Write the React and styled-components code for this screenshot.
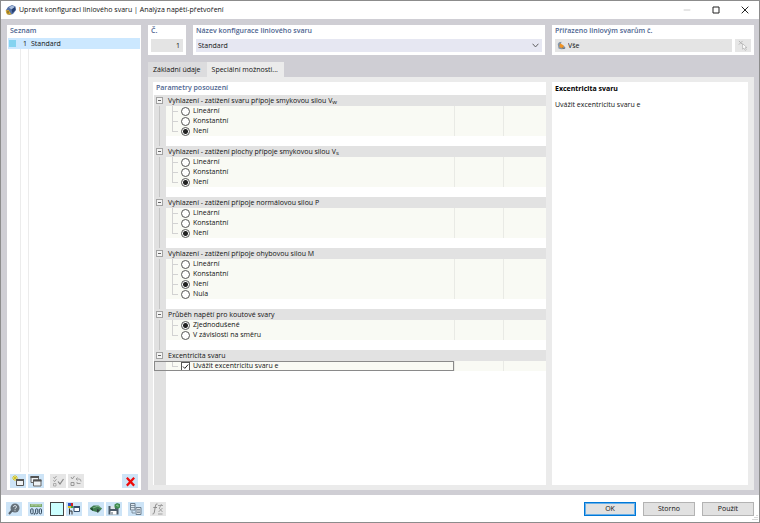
import React, { useState } from 'react';
import styled, { createGlobalStyle, ThemeProvider } from 'styled-components';

const theme = {
  frame: '#cfced4',
  body: '#ebebeb',
  field: '#e4e4e4',
  lavender: '#e6e7f2',
  select: '#cce8ff',
  tool: '#cde4f7',
  heading: '#4d648f',
  text: '#111',
};

const Style = createGlobalStyle`
  * {
    box-sizing: border-box;
  }
  body {
    margin: 0;
  }
  body, button, input, select {
    font-family: 'Open Sans', 'Noto Sans', sans-serif;
    font-size: 7px;
    font-weight: 500;
    line-height: 10px;
    color: ${theme.text};
  }
  svg {
    display: block;
  }
`;

const Window = styled.div`
  position: relative;
  display: flex;
  flex-direction: column;
  min-height: 100vh;
  background: white;
  border: 1px solid #8c8c8c;
`;

const TitleBar = styled.header`
  display: flex;
  align-items: center;
  height: 18px;
  padding-left: 4px;
`;

const Title = styled.h1`
  flex: 1;
  margin: 0 0 0 2px;
  font-size: 7px;
  font-weight: 500;
`;

const WindowButton = styled.button`
  display: flex;
  align-items: center;
  justify-content: center;
  width: 29px;
  height: 18px;
  padding: 0;
  border: 0;
  background: none;
`;

const Content = styled.div`
  flex: 1;
  display: flex;
  gap: 7px;
  padding: 6px 5px 5px 6px;
  background: ${(p) => p.theme.frame};
`;

const Panel = styled.section`
  display: flex;
  flex-direction: column;
  background: white;
`;

const ListPanel = styled(Panel)`
  width: 134px;
`;

const Heading = styled.h2`
  margin: 0;
  padding: 0 3px;
  font-size: 7px;
  line-height: 12px;
  font-weight: 600;
  color: ${(p) => p.theme.heading};
`;

const List = styled.div`
  flex: 1;
  margin: 1px 1px 0;
  background: linear-gradient(#ececec, #ececec) 12px 0 / 1px 100% no-repeat,
    linear-gradient(#ececec, #ececec) 20px 0 / 1px 100% no-repeat;
`;

const ListItem = styled.button`
  display: grid;
  grid-template-columns: 12px 8px 1fr;
  align-items: center;
  width: 100%;
  height: 11px;
  padding: 0;
  border: 0;
  text-align: left;
  background: ${(p) => p.theme.select};
`;

const Swatch = styled.span`
  width: 7px;
  height: 7px;
  margin-left: 1px;
  background: #84d3f0;
`;

const ListNumber = styled.span`
  text-align: right;
  padding-right: 1px;
`;

const ListName = styled.span`
  padding-left: 3px;
`;

const ListTools = styled.div`
  display: flex;
  gap: 2px;
  padding: 2px 3px;
`;

const ToolButton = styled.button`
  display: flex;
  align-items: center;
  justify-content: center;
  width: 16px;
  height: 14px;
  padding: 0;
  border: 0;
  margin-left: ${(p) => (p.$push ? 'auto' : p.$gap ? '4px' : 0)};
  background: ${(p) => (p.disabled ? '#e6e6e6' : p.theme.tool)};
`;

const Main = styled.main`
  flex: 1;
  min-width: 0;
  display: flex;
  flex-direction: column;
`;

const Fields = styled.div`
  display: grid;
  grid-template-columns: 38px 1fr 202px;
  gap: 7px;
  margin-bottom: 7px;
`;

const FieldCard = styled.div`
  display: flex;
  flex-direction: column;
  gap: 3px;
  height: 30px;
  padding: 1px 3px 3px;
  background: white;
`;

const Label = styled.label`
  line-height: 10px;
  font-weight: 600;
  color: ${(p) => p.theme.heading};
`;

const Control = styled.div`
  display: flex;
  align-items: center;
  flex: 1;
  gap: 2px;
  padding: 0 3px 0 2px;
  background: ${(p) => (p.$light ? p.theme.lavender : p.theme.field)};
`;

const Input = styled.input`
  flex: 1;
  min-width: 0;
  width: 100%;
  height: 13px;
  padding: 0;
  border: 0;
  outline: 0;
  background: none;
  text-align: ${(p) => (p.$right ? 'right' : 'left')};
`;

const Select = styled.select`
  flex: 1;
  height: 13px;
  padding: 0;
  border: 0;
  outline: 0;
  appearance: none;
  background: none;
`;

const ControlRow = styled.div`
  display: flex;
  flex: 1;
  gap: 3px;
`;

const PickButton = styled(ToolButton)`
  height: 13px;
`;

const Tabs = styled.div`
  display: flex;
`;

const Tab = styled.button`
  height: 15px;
  padding: 1px 6px 0 5px;
  border: 0;
  background: ${(p) => (p.$active ? p.theme.body : '#dcdcde')};
`;

const TabBody = styled.div`
  flex: 1;
  display: grid;
  grid-template-columns: 1fr 196px;
  gap: 6px;
  padding: 5px 6px 5px 5px;
  background: ${(p) => p.theme.body};
`;

const Tree = styled.div`
  flex: 1;
  display: flex;
  flex-direction: column;
  padding: 1px 0 0 1px;
`;

const Gutter = styled.div`
  width: 12px;
  background: ${(p) =>
      p.$line
        ? 'linear-gradient(#c6c6c6, #c6c6c6) 5px 0 / 1px 100% no-repeat, '
        : ''}
    #e1e1e1;
`;

const GroupHead = styled.div`
  display: flex;
  align-items: center;
  height: 11px;
  padding-left: 2px;
  background: #e2e2e2;
`;

const Toggle = styled.button`
  display: flex;
  align-items: center;
  justify-content: center;
  width: 7px;
  height: 7px;
  padding: 0;
  border: 1px solid #a2a2a2;
  background: #f4f4f4;
  line-height: 4px;

  &::after {
    content: '';
    width: 3px;
    height: 1px;
    background: #666;
  }
`;

const GroupTitle = styled.h3`
  margin: 0 0 0 5px;
  font-size: 7px;
  line-height: 10px;
  font-weight: 500;

  sub {
    font-size: 6px;
    line-height: 0;
    vertical-align: -1px;
  }
`;

const Row = styled.div`
  display: grid;
  grid-template-columns: 12px 1fr 49px 43px;
  height: 10px;
`;

const Option = styled.label`
  display: flex;
  align-items: center;
  gap: 3px;
  padding-left: 6px;
  background: #f9faf4;
`;

const Focus = styled.div`
  grid-column: 1 / 3;
  display: grid;
  grid-template-columns: 12px 1fr;
  outline: 1px solid #8a8a8a;
  outline-offset: -1px;
`;

const Cell = styled.div`
  background: #f9faf4;
  border-left: 1px solid #e9eae5;
`;

const Branch = styled.span`
  align-self: stretch;
  width: 6px;
  background: linear-gradient(#d2d2d2, #d2d2d2) 0 0 / 1px
      ${(p) => (p.$last ? '5px' : '100%')} no-repeat,
    linear-gradient(#d2d2d2, #d2d2d2) 0 5px / 100% 1px no-repeat;
`;

const Radio = styled.input`
  appearance: none;
  width: 9px;
  height: 9px;
  margin: 0;
  border: 1px solid #555;
  border-radius: 50%;
  background: white;

  &:checked {
    background: radial-gradient(circle, #222 0 2px, white 3px);
  }
`;

const Check = styled.input`
  appearance: none;
  width: 9px;
  height: 9px;
  margin: 0;
  border: 1px solid #555;
  background: white;

  &:checked {
    background: white
      url("data:image/svg+xml,%3Csvg xmlns='http://www.w3.org/2000/svg' viewBox='0 0 7 7'%3E%3Cpath d='M1 3.5L2.8 5.4L6.2 1.5' fill='none' stroke='%23222'/%3E%3C/svg%3E");
  }
`;

const Spacer = styled.div`
  display: flex;
  height: 10px;
`;

const Rest = styled.div`
  flex: 1;
  display: flex;
`;

const Info = styled(Panel)`
  padding: 2px 3px;
`;

const InfoTitle = styled.h2`
  margin: 0 0 6px;
  font-size: 7px;
  line-height: 10px;
  font-weight: 700;
  color: black;
`;

const InfoText = styled.p`
  margin: 0;
`;

const Footer = styled.footer`
  display: flex;
  align-items: center;
  justify-content: space-between;
  height: 27px;
  padding: 0 5px;
`;

const Group = styled.div`
  display: flex;
  gap: ${(p) => (p.$wide ? '7px' : '2px')};
`;

const DialogButton = styled.button`
  width: 52px;
  height: 14px;
  padding: 0;
  border: 1px solid ${(p) => (p.$primary ? '#0078d7' : '#b3b3b3')};
  box-shadow: ${(p) => (p.$primary ? 'inset 0 0 0 1px #6ab0e8' : 'none')};
  background: #e1e1e1;
`;

const ColorButton = styled(ToolButton)`
  width: 14px;
  border: 1px solid #444;
  background: #ccffff;
`;

const Grip = styled.span`
  position: absolute;
  right: 1px;
  bottom: 1px;
`;

const Icon = ({ size = 12, children }) => (
  <svg width={size} height={size} viewBox="0 0 12 12" fill="none" aria-hidden="true">
    {children}
  </svg>
);

const AppIcon = () => (
  <Icon>
    <path d="M1 6L3 3L7 1L10.5 2.5L11 6L8 10L4 11L1.5 9Z" fill="#5572a6" />
    <path d="M4 3.5L7 1.5L10 3L6.5 5.5Z" fill="#a9bddd" />
    <path d="M6.5 5.5L10 3L10.5 6L7.5 9Z" fill="#263f70" />
    <path d="M0.5 6.5L3.5 6L6.5 10.5L2 10.5Z" fill="#d9aa2d" />
    <path d="M3 7V9M3 9.5V10" stroke="#493b18" strokeWidth="0.8" />
  </Icon>
);

const WeldIcon = () => (
  <Icon size={9}>
    <path d="M1 4Q2 1 6 1L5 5L10 7L11 10Q6 12 2 10Z" fill="#8195aa" />
    <path d="M4 3L9 6L8 10L3 8Z" fill="#f29422" />
    <path d="M7 9Q9 11 11 9" stroke="#4b5e73" />
  </Icon>
);

const PickIcon = () => (
  <Icon size={11}>
    <path d="M1 1L5 5M5 1L1 5" stroke="#b0b0b0" />
    <path d="M5 4V10L6.5 8.8L7.8 11.3L9 10.6L7.8 8.3H9.7Z" fill="white" stroke="#aaa" strokeWidth="0.7" />
  </Icon>
);

const NewIcon = () => (
  <Icon>
    <path d="M3 0V6M0 3H6M1 1L5 5M5 1L1 5" stroke="#d9c51c" />
    <path d="M4.5 4.5H11.5V10.5H4.5Z" fill="#eef2f5" stroke="#555" />
    <path d="M4 4H12V6H4Z" fill="#555" />
  </Icon>
);

const CopyIcon = () => (
  <Icon>
    <path d="M1 1.5H8.5V7.5H1Z" fill="#eef2f5" stroke="#666" />
    <path d="M0.5 1H9V3H0.5Z" fill="#555" />
    <path d="M3.5 5H11V11H3.5Z" fill="#eef2f5" stroke="#666" />
    <path d="M3 4.5H11.5V6.5H3Z" fill="#555" />
  </Icon>
);

const CheckAllIcon = () => (
  <Icon>
    <path d="M1.5 2L2.5 3.5L4.5 1M1.5 5.2L2.5 6.7L4.5 4.2" stroke="#909090" strokeWidth="0.8" />
    <path d="M1.5 8.5H4V11H1.5Z" stroke="#a0a0a0" strokeWidth="0.8" />
    <path d="M6 6.5L8 9L11.5 4" stroke="#888" strokeWidth="1.2" />
  </Icon>
);

const InvertIcon = () => (
  <Icon>
    <path d="M1 2L2.3 4L4.5 1M1 7.5H4V10.5H1Z" stroke="#909090" strokeWidth="0.9" />
    <path d="M6 4H9Q11 4 11 6.5M7.5 2.5L6 4L7.5 5.5M7 7V8.5H10.5" stroke="#a0a0a0" />
  </Icon>
);

const DeleteIcon = () => (
  <Icon size={11}>
    <path d="M2 2L10 10.5M10 2L2 10.5" stroke="#ee0a0a" strokeWidth="2.4" />
  </Icon>
);

const HelpIcon = () => (
  <Icon>
    <circle cx="7" cy="5" r="4.5" fill="#66717a" />
    <path d="M4 7.5L1 11" stroke="#56616a" strokeWidth="2" />
    <path d="M5.5 4Q5.5 2.5 7 2.5Q8.5 2.5 8.5 4Q8.5 5 7 5.5V6.3M7 7.2V8.2" stroke="#d4dde4" />
  </Icon>
);

const UnitsIcon = () => (
  <Icon>
    <path d="M0 1H12V4H0Z" fill="#7dab6d" />
    <path d="M2 1V3M4 1V2.5M6 1V3M8 1V2.5M10 1V3" stroke="#e2efcf" strokeWidth="0.7" />
    <rect x="0.7" y="5.8" width="2.4" height="5" rx="1" stroke="#33485c" />
    <rect x="5.6" y="5.8" width="2.2" height="5" rx="1" stroke="#33485c" />
    <rect x="9.3" y="5.8" width="2.2" height="5" rx="1" stroke="#33485c" />
    <path d="M4.3 9.8V11.8" stroke="#33485c" />
  </Icon>
);

const ColorsIcon = () => (
  <Icon>
    <path d="M0 0H3V3H0Z" fill="#3153c7" />
    <path d="M3 0H5V3H3Z" fill="#d32121" />
    <path d="M0 3H3V5H0Z" fill="#e6c21c" />
    <path d="M3 3H5V5H3Z" fill="#40a447" />
    <path d="M1.5 5.5V11.5M4 8V11.5M1.5 8H4" stroke="#333" />
    <path d="M6 3.5H11.5V8.5H6Z" fill="white" stroke="#34506e" />
    <path d="M5.5 3H12V5H5.5Z" fill="#34506e" />
  </Icon>
);

const ImportIcon = () => (
  <Icon>
    <path d="M0 5L3.5 2.5H8.5L12 5.5L8.5 9.5L3 8Z" fill="#3f7c50" />
    <path d="M0 5L3 5.5V8L0.5 6.5Z" fill="#1f4d32" />
    <path d="M3 5L8 3L11 5" stroke="#8ec29a" strokeWidth="0.8" />
    <path d="M7 6V10L9.5 7" fill="#303c45" />
  </Icon>
);

const SaveIcon = () => (
  <Icon>
    <path d="M0.5 3H9L10.5 4.5V11.5H0.5Z" fill="#4c5c6a" />
    <path d="M2.5 3H7V6H2.5Z" fill="#dce4ea" />
    <path d="M2.5 8H8.5V11.5H2.5Z" fill="white" />
    <path d="M4 9V11.5" stroke="#4c5c6a" />
    <path d="M6.5 1.5L9 0L12 1V4.5L9.5 6L6.5 4.5Z" fill="#3f8b50" />
    <path d="M8 2.5L10 2V4" stroke="#9dd0a8" strokeWidth="0.8" />
  </Icon>
);

const TransferIcon = () => (
  <Icon>
    <path d="M0.5 0.5H5V7H0.5Z" fill="#dfe9f1" stroke="#6e7f8e" />
    <path d="M1 2.5H5M1 4.5H5" stroke="#6e7f8e" strokeWidth="0.8" />
    <path d="M6 4.5H11V11.5H6Z" fill="#dfe5ea" stroke="#6e7f8e" />
    <path d="M7 6.5H10M7 8H10M7 9.5H10M2 8V10H5" stroke="#6e7f8e" strokeWidth="0.8" />
  </Icon>
);

const FormulaIcon = () => (
  <Icon>
    <path d="M5.5 1Q3.8 0.3 3.4 3L2.4 9Q2 11.5 0.5 11M1.3 4.5H5" stroke="#8d8d8d" />
    <path d="M6 2.5H11M7 5L10.5 9M10.5 5L6.5 9M6 11H10.5M9.5 1L7.5 5" stroke="#9b9b9b" strokeWidth="0.9" />
  </Icon>
);

const groups = [
  {
    id: 'weld',
    title: (
      <>
        Vyhlazení - zatížení svaru přípoje smykovou silou V<sub>w</sub>
      </>
    ),
    options: ['Lineární', 'Konstantní', 'Není'],
    value: 'Není',
  },
  {
    id: 'surface',
    title: (
      <>
        Vyhlazení - zatížení plochy přípoje smykovou silou V<sub>s</sub>
      </>
    ),
    options: ['Lineární', 'Konstantní', 'Není'],
    value: 'Není',
  },
  {
    id: 'normal',
    title: 'Vyhlazení - zatížení přípoje normálovou silou P',
    options: ['Lineární', 'Konstantní', 'Není'],
    value: 'Není',
  },
  {
    id: 'bending',
    title: 'Vyhlazení - zatížení přípoje ohybovou silou M',
    options: ['Lineární', 'Konstantní', 'Není', 'Nula'],
    value: 'Není',
  },
  {
    id: 'fillet',
    title: 'Průběh napětí pro koutové svary',
    options: ['Zjednodušené', 'V závislosti na směru'],
    value: 'Zjednodušené',
  },
];

const RadioGroup = ({ id, title, options, value }) => {
  const [selected, setSelected] = useState(value);
  const [open, setOpen] = useState(true);

  return (
    <div>
      <GroupHead>
        <Toggle aria-label="Sbalit" aria-expanded={open} onClick={() => setOpen(!open)} />
        <GroupTitle>{title}</GroupTitle>
      </GroupHead>
      {open &&
        options.map((option, i) => (
          <Row key={option}>
            <Gutter $line />
            <Option>
              <Branch $last={i === options.length - 1} />
              <Radio
                type="radio"
                name={id}
                checked={selected === option}
                onChange={() => setSelected(option)}
              />
              {option}
            </Option>
            <Cell />
            <Cell />
          </Row>
        ))}
      <Spacer>
        <Gutter $line />
      </Spacer>
    </div>
  );
};

const App = () => {
  const [eccentric, setEccentric] = useState(true);

  return (
    <ThemeProvider theme={theme}>
      <Style />
      <Window>
        <TitleBar>
          <AppIcon />
          <Title>Upravit konfiguraci liniového svaru | Analýza napětí-přetvoření</Title>
          <WindowButton aria-label="Minimalizovat" disabled>
            <Icon size={8}>
              <path d="M1 6H11" stroke="#ccc" strokeWidth="1.5" />
            </Icon>
          </WindowButton>
          <WindowButton aria-label="Maximalizovat">
            <Icon size={8}>
              <path d="M1.5 1.5H10.5V10.5H1.5Z" stroke="#222" strokeWidth="1.5" />
            </Icon>
          </WindowButton>
          <WindowButton aria-label="Zavřít">
            <Icon size={8}>
              <path d="M1 1L11 11M11 1L1 11" stroke="#222" strokeWidth="1.5" />
            </Icon>
          </WindowButton>
        </TitleBar>

        <Content>
          <ListPanel>
            <Heading>Seznam</Heading>
            <List>
              <ListItem>
                <Swatch />
                <ListNumber>1</ListNumber>
                <ListName>Standard</ListName>
              </ListItem>
            </List>
            <ListTools>
              <ToolButton aria-label="Nový"><NewIcon /></ToolButton>
              <ToolButton aria-label="Kopírovat"><CopyIcon /></ToolButton>
              <ToolButton aria-label="Vybrat vše" disabled $gap><CheckAllIcon /></ToolButton>
              <ToolButton aria-label="Invertovat výběr" disabled><InvertIcon /></ToolButton>
              <ToolButton aria-label="Smazat" $push><DeleteIcon /></ToolButton>
            </ListTools>
          </ListPanel>

          <Main>
            <Fields>
              <FieldCard>
                <Label htmlFor="number">Č.</Label>
                <Control>
                  <Input id="number" value="1" readOnly $right />
                </Control>
              </FieldCard>
              <FieldCard>
                <Label htmlFor="name">Název konfigurace liniového svaru</Label>
                <Control $light>
                  <Select id="name" defaultValue="Standard">
                    <option>Standard</option>
                  </Select>
                  <Icon size={7}>
                    <path d="M1 3L6 8.5L11 3" stroke="#555" strokeWidth="1.6" />
                  </Icon>
                </Control>
              </FieldCard>
              <FieldCard>
                <Label htmlFor="assigned">Přiřazeno liniovým svarům č.</Label>
                <ControlRow>
                  <Control>
                    <WeldIcon />
                    <Input id="assigned" value="Vše" readOnly />
                  </Control>
                  <PickButton aria-label="Vybrat" disabled><PickIcon /></PickButton>
                </ControlRow>
              </FieldCard>
            </Fields>

            <Tabs role="tablist">
              <Tab role="tab">Základní údaje</Tab>
              <Tab role="tab" aria-selected $active>Speciální možnosti...</Tab>
            </Tabs>
            <TabBody>
              <Panel>
                <Heading>Parametry posouzení</Heading>
                <Tree>
                  {groups.map((group) => (
                    <RadioGroup key={group.id} {...group} />
                  ))}
                  <GroupHead>
                    <Toggle aria-label="Sbalit" />
                    <GroupTitle>Excentricita svaru</GroupTitle>
                  </GroupHead>
                  <Row>
                    <Focus>
                      <Gutter />
                      <Option>
                        <Branch $last />
                        <Check
                          type="checkbox"
                          checked={eccentric}
                          onChange={() => setEccentric(!eccentric)}
                        />
                        Uvážit excentricitu svaru e
                      </Option>
                    </Focus>
                    <Cell />
                    <Cell />
                  </Row>
                  <Rest>
                    <Gutter />
                  </Rest>
                </Tree>
              </Panel>
              <Info>
                <InfoTitle>Excentricita svaru</InfoTitle>
                <InfoText>Uvážit excentricitu svaru e</InfoText>
              </Info>
            </TabBody>
          </Main>
        </Content>

        <Footer>
          <Group>
            <ToolButton aria-label="Nápověda"><HelpIcon /></ToolButton>
            <ToolButton aria-label="Jednotky" $gap><UnitsIcon /></ToolButton>
            <ColorButton aria-label="Barva" $gap />
            <ToolButton aria-label="Barvy"><ColorsIcon /></ToolButton>
            <ToolButton aria-label="Načíst" $gap><ImportIcon /></ToolButton>
            <ToolButton aria-label="Uložit"><SaveIcon /></ToolButton>
            <ToolButton aria-label="Převzít" $gap><TransferIcon /></ToolButton>
            <ToolButton aria-label="Vzorec" disabled $gap><FormulaIcon /></ToolButton>
          </Group>
          <Group $wide>
            <DialogButton $primary>OK</DialogButton>
            <DialogButton>Storno</DialogButton>
            <DialogButton>Použít</DialogButton>
          </Group>
        </Footer>
        <Grip>
          <Icon size={6}>
            <path d="M9 1H11M5 5H7M9 5H11M1 9H3M5 9H7M9 9H11" stroke="#aaa" strokeWidth="2" />
          </Icon>
        </Grip>
      </Window>
    </ThemeProvider>
  );
};

export default App;
